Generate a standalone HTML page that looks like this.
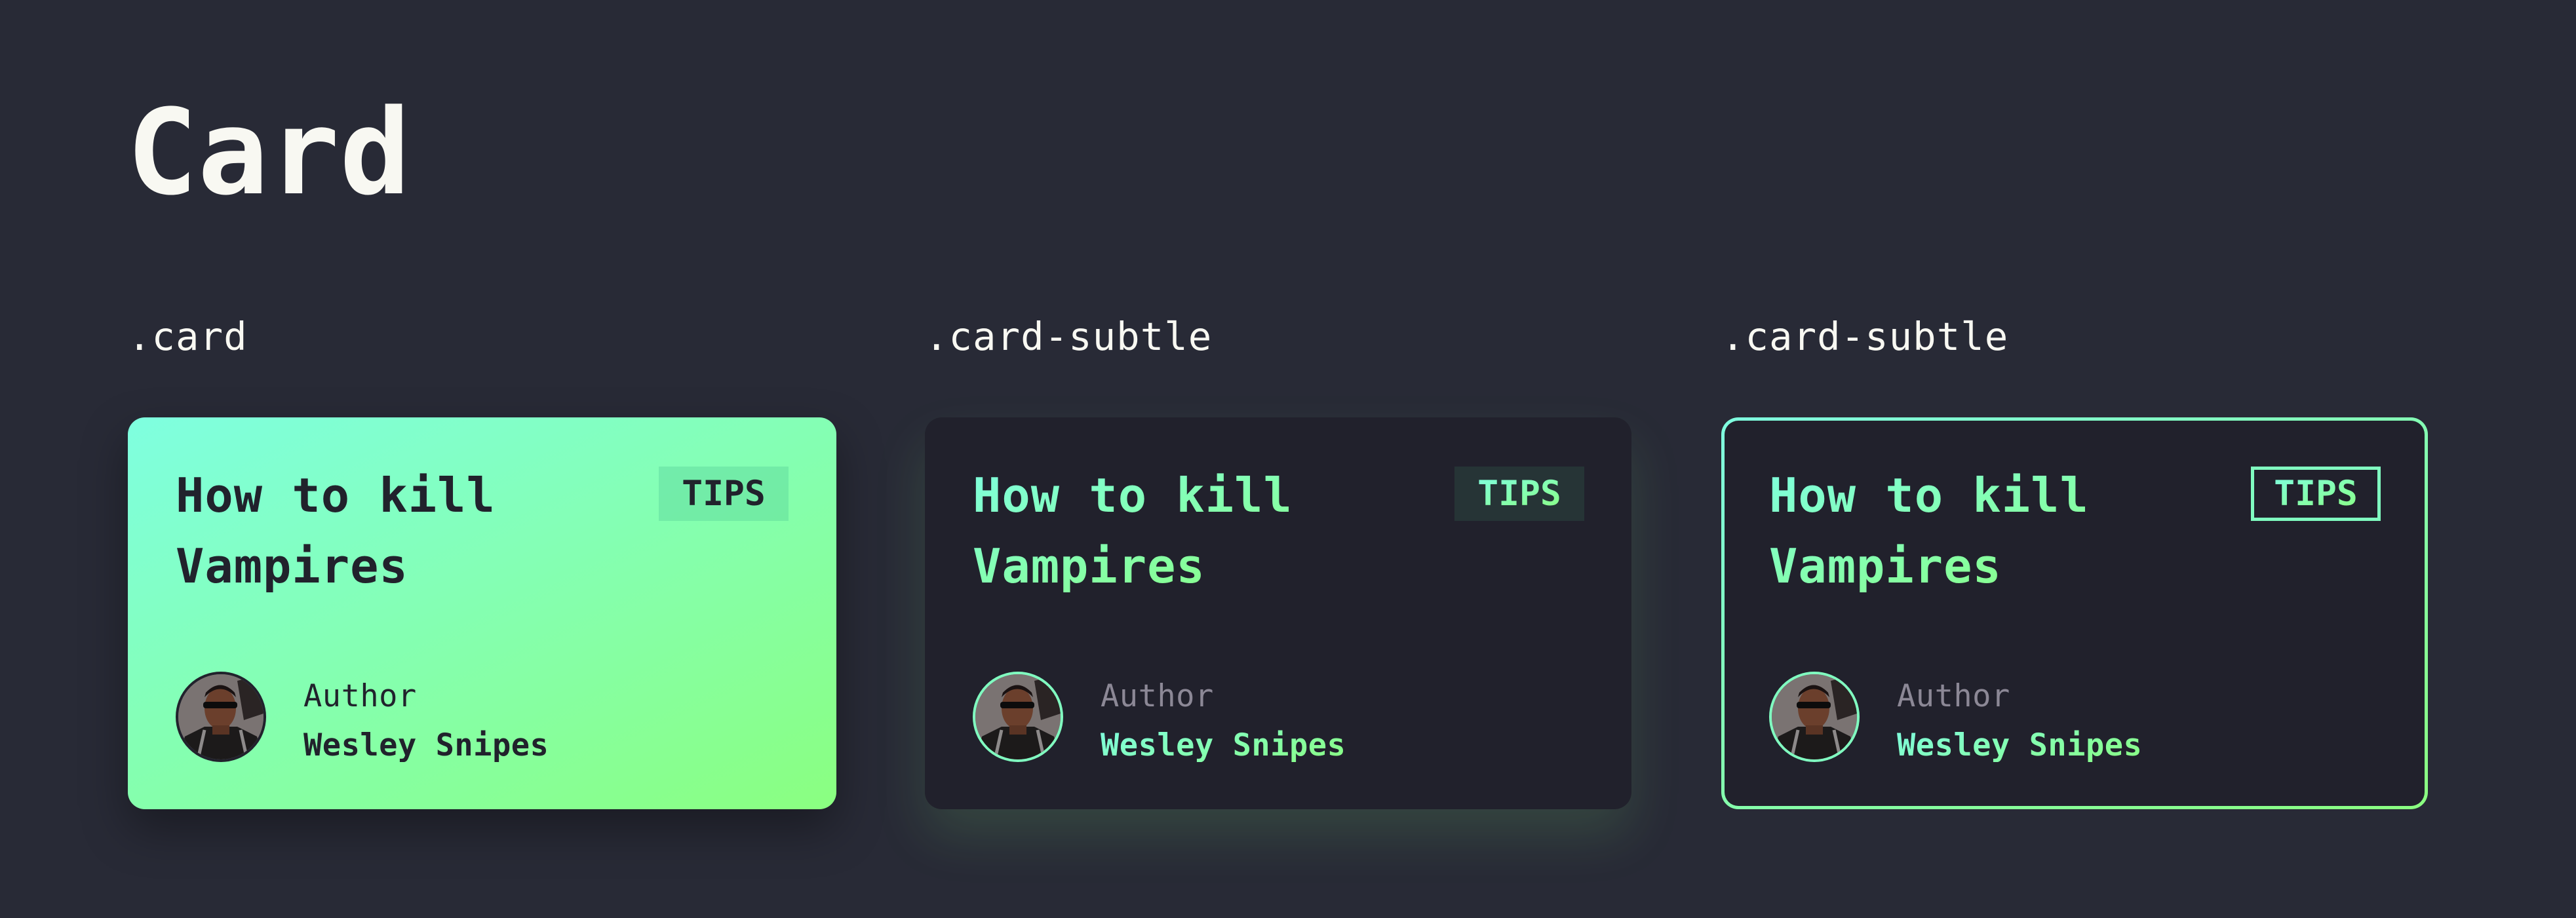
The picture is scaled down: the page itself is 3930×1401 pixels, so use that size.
<!DOCTYPE html>
<html><head><meta charset="utf-8"><style>
html,body{margin:0;padding:0;}
body{width:3930px;height:1401px;background:#282a36;font-family:"DejaVu Sans Mono","Liberation Mono",monospace;position:relative;overflow:hidden;color:#f8f8f2;}
.h1{position:absolute;left:193px;top:124px;font-size:180px;font-weight:bold;line-height:220px;letter-spacing:0px;color:#f8f8f2;}
.lbl{position:absolute;top:474px;font-size:59px;line-height:80px;color:#f8f8f2;letter-spacing:1px;}
.card{position:absolute;top:637px;width:1081px;height:598px;border-radius:26px;box-sizing:border-box;}
.c1{left:195px;background:linear-gradient(155deg,#7fffe0 0%,#8aff80 100%);box-shadow:0 30px 70px rgba(0,0,0,0.35);color:#21222c;}
.c2{left:1411px;width:1078px;background:#21212c;box-shadow:0 40px 80px rgba(138,255,128,0.13);}
.c3{left:2626px;width:1078px;background:linear-gradient(#21212c,#21212c) padding-box,linear-gradient(155deg,#7fffe0,#8aff80) border-box;border:5px solid transparent;}
.title{position:absolute;left:73px;top:65px;font-size:72px;font-weight:bold;line-height:108px;letter-spacing:1px;}
.c3 .title{left:68px;top:60px}
.grad{background:linear-gradient(160deg,#7fffe0,#8aff80);-webkit-background-clip:text;background-clip:text;color:transparent;}
.tips{position:absolute;left:810px;top:75px;width:198px;height:83px;font-size:53px;font-weight:bold;line-height:83px;text-align:center;box-sizing:border-box;}
.c1 .tips{background:rgba(80,200,150,0.35);color:#21222c}
.c2 .tips{left:808px;background:#263436;}
.c3 .tips{left:803px;top:70px;border:5px solid #80fcc0;line-height:73px;}
.av{position:absolute;left:73px;top:388px;width:138px;height:138px;border-radius:50%;box-sizing:border-box;border:4px solid #21222c;overflow:hidden;background:#6f6a6a;}
.c2 .av,.c3 .av{border-color:#80fcc0}
.c3 .av{left:68px;top:383px}
.au{position:absolute;left:268px;top:396px;font-size:47px;line-height:60px;letter-spacing:0.5px;}
.c2 .au,.c3 .au{color:#8c8896}
.c3 .au{left:263px;top:391px}
.nm{position:absolute;left:268px;top:471px;font-size:47px;font-weight:bold;line-height:60px;letter-spacing:0.5px;}
.c3 .nm{left:263px;top:466px}
</style></head><body>
<div class="h1">Card</div>
<div class="lbl" style="left:195px">.card</div>
<div class="lbl" style="left:1411px">.card-subtle</div>
<div class="lbl" style="left:2626px">.card-subtle</div>

<div class="card c1">
<div class="title">How to kill<br>Vampires</div>
<div class="tips">TIPS</div>
<div class="av"><svg width="130" height="130" viewBox="0 0 130 130"><rect width="130" height="130" fill="#7a7372"/><path d="M90 10 L130 0 L130 60 L100 70Z" fill="#2a2424"/><path d="M0 130 L10 95 L40 80 L90 80 L120 95 L130 130Z" fill="#1c1a1a"/><path d="M40 85 L30 130 M95 85 L105 130" stroke="#8d8a8a" stroke-width="5"/><ellipse cx="64" cy="52" rx="24" ry="32" fill="#6b3f2c"/><path d="M40 35 Q64 10 88 35 L86 28 Q64 5 42 28Z" fill="#1a1212"/><rect x="38" y="42" width="52" height="10" rx="4" fill="#0c0c0c"/><rect x="52" y="78" width="26" height="14" fill="#5a3424"/></svg></div>
<div class="au">Author</div>
<div class="nm">Wesley Snipes</div>
</div>

<div class="card c2">
<div class="title grad">How to kill<br>Vampires</div>
<div class="tips"><span class="grad">TIPS</span></div>
<div class="av"><svg width="130" height="130" viewBox="0 0 130 130"><rect width="130" height="130" fill="#7a7372"/><path d="M90 10 L130 0 L130 60 L100 70Z" fill="#2a2424"/><path d="M0 130 L10 95 L40 80 L90 80 L120 95 L130 130Z" fill="#1c1a1a"/><path d="M40 85 L30 130 M95 85 L105 130" stroke="#8d8a8a" stroke-width="5"/><ellipse cx="64" cy="52" rx="24" ry="32" fill="#6b3f2c"/><path d="M40 35 Q64 10 88 35 L86 28 Q64 5 42 28Z" fill="#1a1212"/><rect x="38" y="42" width="52" height="10" rx="4" fill="#0c0c0c"/><rect x="52" y="78" width="26" height="14" fill="#5a3424"/></svg></div>
<div class="au">Author</div>
<div class="nm grad">Wesley Snipes</div>
</div>

<div class="card c3">
<div class="title grad">How to kill<br>Vampires</div>
<div class="tips"><span class="grad">TIPS</span></div>
<div class="av"><svg width="130" height="130" viewBox="0 0 130 130"><rect width="130" height="130" fill="#7a7372"/><path d="M90 10 L130 0 L130 60 L100 70Z" fill="#2a2424"/><path d="M0 130 L10 95 L40 80 L90 80 L120 95 L130 130Z" fill="#1c1a1a"/><path d="M40 85 L30 130 M95 85 L105 130" stroke="#8d8a8a" stroke-width="5"/><ellipse cx="64" cy="52" rx="24" ry="32" fill="#6b3f2c"/><path d="M40 35 Q64 10 88 35 L86 28 Q64 5 42 28Z" fill="#1a1212"/><rect x="38" y="42" width="52" height="10" rx="4" fill="#0c0c0c"/><rect x="52" y="78" width="26" height="14" fill="#5a3424"/></svg></div>
<div class="au">Author</div>
<div class="nm grad">Wesley Snipes</div>
</div>
</body></html>
